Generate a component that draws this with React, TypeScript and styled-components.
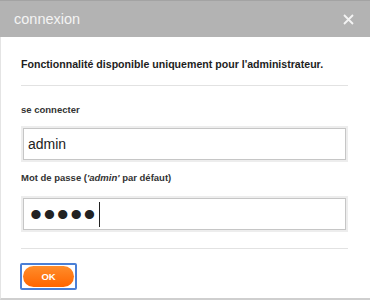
import React, { useEffect, useRef } from 'react';
import styled, { createGlobalStyle } from 'styled-components';

const GlobalStyle = createGlobalStyle`
    body {
        margin: 0;
        background: #fff;
        overflow: hidden;
        font-family: Arial, 'Liberation Sans', sans-serif;
    }
`;

export default function App() {
    const passwordRef = useRef<HTMLInputElement>(null);

    useEffect(() => {
        const input = passwordRef.current;
        if (input) {
            input.focus();
            input.setSelectionRange(input.value.length, input.value.length);
        }
    }, []);

    return (
        <>
            <GlobalStyle />
            <Dialog>
                <Header>
                    <Title>connexion</Title>
                    <Close type='button' aria-label='fermer'>
                        <svg width='11' height='11' viewBox='0 0 11 11'>
                            <path d='M1 1 L10 10 M10 1 L1 10' stroke='#f4f4f4' strokeWidth='1.8' />
                        </svg>
                    </Close>
                </Header>
                <Body>
                    <Notice>Fonctionnalité disponible uniquement pour l'administrateur.</Notice>
                    <Rule $before={14} $after={18} />
                    <Label $gap={12}>se connecter</Label>
                    <Field type='text' defaultValue='admin' />
                    <Label $gap={14}>
                        Mot de passe (<em>'admin'</em> par défaut)
                    </Label>
                    <FieldWrap>
                        <Field ref={passwordRef} type='password' defaultValue='admin' $password />
                        <Caret />
                    </FieldWrap>
                    <Rule $before={6} $after={14} />
                    <FocusRing>
                        <OkButton type='button'>OK</OkButton>
                    </FocusRing>
                </Body>
            </Dialog>
        </>
    );
}

const Dialog = styled.div`
    width: 370px;
    height: 300px;
    box-sizing: border-box;
    border-left: 1px solid #e4e4e4;
    border-bottom: 2px solid #cfcfcf;
    background: #fff;
    display: flex;
    flex-direction: column;
`;

const Header = styled.div`
    height: 37px;
    flex-shrink: 0;
    box-sizing: border-box;
    border-top: 1px solid #a3a3a3;
    background: #b3b3b3;
    display: flex;
    align-items: center;
    justify-content: space-between;
    padding: 0 16px 0 14px;
    margin-left: -1px;
`;

const Title = styled.span`
    color: #f4f4f4;
    font-size: 14.5px;
`;

const Close = styled.button`
    border: none;
    background: transparent;
    padding: 0;
    display: flex;
    cursor: pointer;
`;

const Body = styled.div`
    display: flex;
    flex-direction: column;
    align-items: flex-start;
    padding: 20px 0 0 20px;
    width: 327px;
`;

const Notice = styled.p`
    margin: 0;
    font-size: 10.6px;
    font-weight: bold;
    color: #1e1e1e;
    line-height: 14px;
    white-space: nowrap;
`;

const Rule = styled.hr<{ $before: number; $after: number }>`
    align-self: stretch;
    margin: ${(p) => p.$before}px 0 ${(p) => p.$after}px;
    border: none;
    border-top: 1px solid #e2e2e2;
`;

const Label = styled.div<{ $gap: number }>`
    margin-bottom: ${(p) => p.$gap}px;
    font-size: 9.5px;
    font-weight: bold;
    color: #333;
    line-height: 12px;

    em {
        font-style: italic;
    }
`;

const FieldWrap = styled.div`
    position: relative;
`;

const Field = styled.input<{ $password?: boolean }>`
    display: block;
    box-sizing: border-box;
    width: 323px;
    height: 32px;
    margin: 0 2px 12px;
    padding: 0 ${(p) => (p.$password ? '6px' : '4px')};
    border: 1px solid #c6c6c6;
    box-shadow: 0 0 0 2px #ededed;
    font-family: Arial, 'Liberation Sans', sans-serif;
    font-size: ${(p) => (p.$password ? '34px' : '14px')};
    letter-spacing: ${(p) => (p.$password ? '1.5px' : '0')};
    color: #222;
    caret-color: transparent;
    outline: none;
`;

const Caret = styled.span`
    position: absolute;
    left: 78px;
    top: 4px;
    width: 1px;
    height: 25px;
    background: #222;
`;

const FocusRing = styled.div`
    margin-left: -1px;
    padding: 1px;
    border: 2px solid #4a7fd6;
    border-radius: 2px;
    display: flex;
`;

const OkButton = styled.button`
    width: 51px;
    height: 21px;
    padding: 0;
    border: none;
    border-radius: 11px;
    background: linear-gradient(#ff8d2b, #ff6500);
    color: #fff;
    font-family: Arial, 'Liberation Sans', sans-serif;
    font-size: 9.5px;
    font-weight: bold;
    outline: none;
    cursor: pointer;
`;
